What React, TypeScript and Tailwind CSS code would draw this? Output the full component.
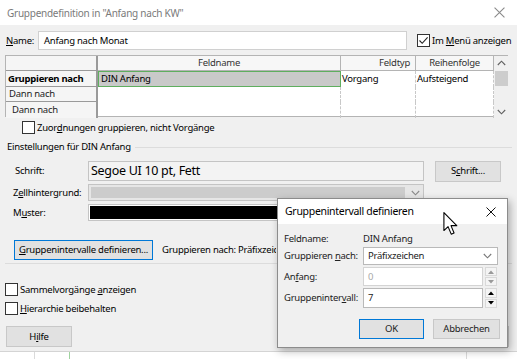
import React from 'react'

const U = ({ children }: { children: React.ReactNode }) => (
  <span className="underline underline-offset-[1px] decoration-[1px]">{children}</span>
)

function CheckBox({ checked = false }: { checked?: boolean }) {
  return (
    <span className="w-[13px] h-[13px] border border-[#333] bg-white flex items-center justify-center shrink-0">
      {checked && (
        <svg width="11" height="11" viewBox="0 0 11 11">
          <path d="M1.5 5.5 L4.2 8.3 L9.6 2.4" fill="none" stroke="#222" strokeWidth="1.1" />
        </svg>
      )}
    </span>
  )
}

function Chevron({ up = false, color = '#555' }: { up?: boolean; color?: string }) {
  return (
    <svg width="9" height="6" viewBox="0 0 9 6">
      <path d={up ? 'M0.8 5 L4.5 1.2 L8.2 5' : 'M0.8 1 L4.5 4.8 L8.2 1'} fill="none" stroke={color} strokeWidth="1.1" />
    </svg>
  )
}

function CloseX({ color, size }: { color: string; size: number }) {
  return (
    <svg width={size} height={size} viewBox="0 0 10 10">
      <path d="M0.5 0.5 L9.5 9.5 M9.5 0.5 L0.5 9.5" stroke={color} strokeWidth="1" />
    </svg>
  )
}

function Spinner({ enabled }: { enabled: boolean }) {
  const c = enabled ? '#000' : '#9a9a9a'
  return (
    <div className="w-[12px] h-full flex flex-col gap-[1px]">
      <div className="flex-1 bg-[#f4f4f4] border border-[#d9d9d9] flex items-center justify-center">
        <svg width="6" height="4" viewBox="0 0 6 4"><path d="M0 4 L3 0.5 L6 4 Z" fill={c} /></svg>
      </div>
      <div className="flex-1 bg-[#f4f4f4] border border-[#d9d9d9] flex items-center justify-center">
        <svg width="6" height="4" viewBox="0 0 6 4"><path d="M0 0 L3 3.5 L6 0 Z" fill={c} /></svg>
      </div>
    </div>
  )
}

function Cursor() {
  return (
    <svg width="16" height="24" viewBox="0 0 14 22">
      <path
        d="M0.5 0.5 L0.5 17 L4.3 13.4 L7.2 20.3 L9.8 19.2 L7 12.5 L12.3 12.5 Z"
        fill="#fff"
        stroke="#000"
        strokeWidth="1"
        strokeLinejoin="round"
      />
    </svg>
  )
}

export default function App() {
  return (
    <div className="relative w-[517px] h-[359px] overflow-hidden bg-white font-['Noto_Sans',sans-serif] text-[9.5px] tracking-[-0.25px] whitespace-nowrap text-black leading-none">
      {/* Title bar */}
      <div className="h-[25px] bg-white flex items-center justify-between pl-[7px] pr-[12px]">
        <span className="text-[10px] text-[#7a7a7a]">Gruppendefinition in "Anfang nach KW"</span>
        <CloseX color="#8a8a8a" size={11} />
      </div>

      {/* Dialog body */}
      <div className="h-[327px] bg-[#f0f0f0] border-b border-[#d4d4d4] flex flex-col px-[5px]">
        {/* Name row */}
        <div className="mt-[6px] h-[19px] flex items-center">
          <span className="w-[33px] pl-[1px]"><U>N</U>ame:</span>
          <div className="w-[369px] h-full bg-white border border-[#d0d0d0] flex items-center pl-[5px]">
            Anfang nach Monat
          </div>
          <div className="ml-[10px] flex items-center gap-[2px]">
            <CheckBox checked />
            <span>Im <U>M</U>enü anzeigen</span>
          </div>
        </div>

        {/* Grid */}
        <div className="mt-[5px] w-[503px] h-[62px] grid grid-cols-[92px_243px_75px_78px_15px] grid-rows-[15px_16px_15px_16px] border border-[#b4b4b4] bg-white">
          <div className="bg-[#f5f5f5] border-r-2 border-b border-[#9a9a9a]" />
          <div className="bg-[#f7f7f7] border-r border-b border-[#b4b4b4] flex items-center justify-center text-[#333]">Feldname</div>
          <div className="bg-[#f7f7f7] border-r border-b border-[#b4b4b4] flex items-center justify-end pr-[5px] text-[#333]">Feldtyp</div>
          <div className="bg-[#f7f7f7] border-r border-b border-[#b4b4b4] flex items-center justify-center text-[#333]">Reihenfolge</div>
          <div className="row-span-4 bg-[#f0f0f0] flex flex-col items-center pt-[4px] pb-[3px]">
            <Chevron up color="#606060" />
            <div className="mt-[5px] w-[13px] h-[15px] bg-[#cdcdcd]" />
            <div className="flex-1" />
            <Chevron color="#606060" />
          </div>

          <div className="bg-[#f5f5f5] border-r-2 border-b border-[#9a9a9a] flex items-center pl-[2px] font-bold">Gruppieren nach</div>
          <div className="bg-[#c9c9c9] border border-[#5fae5f] flex items-center pl-[2px]">DIN Anfang</div>
          <div className="border-r border-dashed border-[#c8c8c8] flex items-center pl-[1px]">Vorgang</div>
          <div className="border-r border-dashed border-[#c8c8c8] flex items-center pl-[1px]">Aufsteigend</div>

          <div className="bg-[#f5f5f5] border-r-2 border-b border-[#9a9a9a] flex items-center pl-[3px] text-[#222]">Dann nach</div>
          <div className="border-r border-dashed border-[#c8c8c8]" />
          <div className="border-r border-dashed border-[#c8c8c8]" />
          <div className="border-r border-dashed border-[#c8c8c8]" />

          <div className="bg-[#f5f5f5] border-r-2 border-[#9a9a9a] flex items-center pl-[6px] text-[#222]">Dann nach</div>
          <div className="border-r border-dashed border-[#c8c8c8]" />
          <div className="border-r border-dashed border-[#c8c8c8]" />
          <div className="border-r border-dashed border-[#c8c8c8]" />
        </div>

        {/* Assign checkbox */}
        <div className="mt-[4px] h-[13px] flex items-center gap-[2px] pl-[17px]">
          <CheckBox />
          <span>Zuor<U>d</U>nungen gruppieren, nicht Vorgänge</span>
        </div>

        {/* Group: Einstellungen */}
        <div className="mt-[7px] h-[12px] flex items-center gap-[4px] pl-[2px]">
          <span>Einstellungen für DIN Anfang</span>
          <div className="flex-1 h-px bg-[#dcdcdc]" />
        </div>

        <div className="mt-[8px] h-[20px] flex items-center">
          <span className="w-[83px] pl-[10px]">Schrift:</span>
          <div className="w-[336px] h-full border border-[#c4c4c4] bg-[#f3f3f3] flex items-center pl-[2px] text-[12.5px] tracking-[-0.3px]">
            Segoe UI 10 pt, Fett
          </div>
          <div className="ml-[11px] w-[66px] h-[21px] bg-[#e1e1e1] border border-[#c8c8c8] flex items-center justify-center">
            <span>S<U>c</U>hrift...</span>
          </div>
        </div>

        <div className="mt-[3px] h-[17px] flex items-center">
          <span className="w-[83px] pl-[8px]">Z<U>e</U>llhintergrund:</span>
          <div className="w-[336px] h-full border border-[#c4c4c4] bg-[#e6e6e6] flex">
            <div className="flex-1 bg-[#cccccc] m-[2px]" />
            <div className="w-[16px] flex items-center justify-center">
              <Chevron color="#8a8a8a" />
            </div>
          </div>
        </div>

        <div className="mt-[3px] h-[17px] flex items-center">
          <span className="w-[83px] pl-[8px]">M<U>u</U>ster:</span>
          <div className="w-[336px] h-full border border-[#c4c4c4] bg-white p-[1px]">
            <div className="w-full h-full bg-black" />
          </div>
        </div>

        <div className="mt-[19px] h-[20px] flex items-center">
          <div className="ml-[9px] w-[139px] h-[20px] bg-[#e1e1e1] border border-[#0078d7] flex items-center justify-center">
            <span><U>G</U>ruppenintervalle definieren...</span>
          </div>
          {/* the popup covers the rest of this text */}
          <span className="ml-[9px] w-[114px] overflow-hidden">Gruppieren nach: Präfixzeichen</span>
        </div>

        <div className="mt-[3px] h-px bg-[#dcdcdc]" />

        <div className="mt-[19px] h-[13px] flex items-center gap-[2px]">
          <CheckBox />
          <span>Sammelvorgänge <U>a</U>nzeigen</span>
        </div>
        <div className="mt-[6px] h-[13px] flex items-center gap-[2px]">
          <CheckBox />
          <span><U>H</U>ierarchie beibehalten</span>
        </div>

        <div className="mt-[11px] flex items-center justify-between">
          <div className="ml-px w-[66px] h-[21px] bg-[#e1e1e1] border border-[#c8c8c8] flex items-center justify-center">
            <span>H<U>i</U>lfe</span>
          </div>
          <div className="mr-[3px] w-[70px] h-[21px] bg-[#e1e1e1] border border-[#c8c8c8]" />
        </div>
      </div>

      {/* Strip of the sheet behind */}
      <div className="h-[7px] flex">
        <div className="w-[35px] border-r border-[#dadada]" />
        <div className="w-[35px] border-r border-[#9fd39f]" />
        <div className="w-[397px] border-r border-[#dadada]" />
      </div>

      {/* Popup dialog */}
      <div className="absolute left-[277px] top-[198px] w-[231px] h-[150px] border border-[#8c8c8c] bg-[#f0f0f0] shadow-[2px_3px_8px_rgba(0,0,0,0.3)] flex flex-col">
        <div className="h-[25px] bg-white flex items-center justify-between pl-[7px] pr-[11px]">
          <span className="text-[10.5px] tracking-[-0.3px]">Gruppenintervall definieren</span>
          <CloseX color="#111" size={10} />
        </div>
        <div className="flex flex-col px-[6px] text-[#222]">
          <div className="mt-[9px] h-[12px] flex items-center">
            <span className="w-[79px]">Feldname:</span>
            <span>DIN Anfang</span>
          </div>
          <div className="mt-[2px] h-[18px] flex items-center">
            <span className="w-[79px]">Gruppieren <U>n</U>ach:</span>
            <div className="w-[135px] h-full bg-white border border-[#b9b9b9] flex items-center justify-between pl-[4px] pr-[5px]">
              <span>Präfixzeichen</span>
              <Chevron color="#777" />
            </div>
          </div>
          <div className="mt-[2px] h-[19px] flex items-center">
            <span className="w-[79px]">An<U>f</U>ang:</span>
            <div className="w-[120px] h-full bg-white border border-[#d4d4d4] flex items-center pl-[4px] text-[#a8a8a8]">0</div>
            <div className="ml-[2px] h-full"><Spinner enabled={false} /></div>
          </div>
          <div className="mt-[2px] h-[20px] flex items-center">
            <span className="w-[79px]">Gruppeninter<U>v</U>all:</span>
            <div className="w-[120px] h-full bg-white border border-[#b9b9b9] flex items-center pl-[4px]">7</div>
            <div className="ml-[2px] h-full"><Spinner enabled /></div>
          </div>
          <div className="mt-[11px] h-[20px] flex items-center justify-end gap-[9px] pr-[1px]">
            <div className="w-[65px] h-full bg-[#e1e1e1] border border-[#0078d7] flex items-center justify-center">OK</div>
            <div className="w-[67px] h-full bg-[#e1e1e1] border border-[#c8c8c8] flex items-center justify-center">Abbrechen</div>
          </div>
        </div>
      </div>

      {/* Mouse pointer */}
      <div className="absolute left-[443px] top-[212px]">
        <Cursor />
      </div>
    </div>
  )
}
